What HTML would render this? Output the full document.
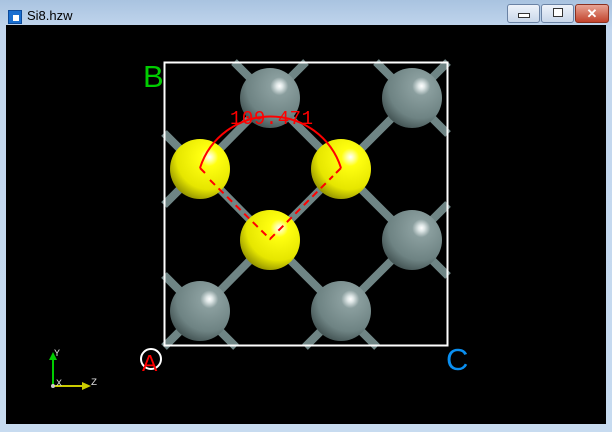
<!DOCTYPE html>
<html><head><style>
html,body{margin:0;padding:0;width:612px;height:432px;overflow:hidden;background:#b9d1ea}
.frame{position:absolute;left:0;top:0;width:612px;height:432px;background:linear-gradient(#a9c3e0,#c3d7ee 30px,#c7dbf0);}
.title{position:absolute;left:27px;top:8px;font:13px "Liberation Sans",sans-serif;color:#000}
.icon{position:absolute;left:8px;top:10px;width:12px;height:12px;background:#1a6fd0;border:1px solid #0c4a9a}
.icon:after{content:"";position:absolute;left:4px;top:4px;width:6px;height:6px;background:#fff}
.btn{position:absolute;top:4px;height:17px;border:1px solid #6a82a4;border-radius:3px;background:linear-gradient(#eef3fa,#c9d7ea)}
.view{position:absolute;left:6px;top:25px;width:600px;height:399px;background:#000}
</style></head><body>
<div class="frame"></div>
<div class="icon"></div>
<div class="title">Si8.hzw</div>
<div class="btn" style="left:507px;width:31px"><div style="position:absolute;left:10px;top:8px;width:10px;height:3px;border:1px solid #333;background:#fff"></div></div>
<div class="btn" style="left:541px;width:31px"><div style="position:absolute;left:11px;top:3px;width:8px;height:7px;border:1px solid #333;background:#fff"></div></div>
<div class="btn" style="left:575px;width:32px;background:linear-gradient(#e8a595,#c2432c);border-color:#8a3020;color:#fff;font:bold 13px 'Liberation Sans',sans-serif;text-align:center;line-height:17px">✕</div>
<div class="view"></div>
<svg width="612" height="432" style="position:absolute;left:0;top:0">
<defs>
<radialGradient id="g" cx="0.63" cy="0.32" r="0.75" fx="0.66" fy="0.3"><stop offset="0" stop-color="#ffffff"/><stop offset="0.07" stop-color="#dfe7e7"/><stop offset="0.2" stop-color="#8a9e9e"/><stop offset="0.7" stop-color="#6e8383"/><stop offset="1" stop-color="#3e4e4e"/></radialGradient>
<radialGradient id="y" cx="0.63" cy="0.32" r="0.75" fx="0.66" fy="0.3"><stop offset="0" stop-color="#ffffff"/><stop offset="0.07" stop-color="#ffffb0"/><stop offset="0.2" stop-color="#ffff10"/><stop offset="0.7" stop-color="#e6e600"/><stop offset="1" stop-color="#8a8a00"/></radialGradient>
</defs>
<g stroke="#6f8585" stroke-width="8">
<line x1="200" y1="169" x2="270" y2="98"/><line x1="341" y1="169" x2="270" y2="98"/>
<line x1="341" y1="169" x2="412" y2="98"/><line x1="200" y1="169" x2="270" y2="240"/>
<line x1="341" y1="169" x2="270" y2="240"/><line x1="341" y1="169" x2="412" y2="240"/>
<line x1="270" y1="240" x2="200" y2="311"/><line x1="270" y1="240" x2="341" y2="311"/>
<line x1="412" y1="240" x2="341" y2="311"/>
<line x1="270" y1="98" x2="234" y2="62"/><line x1="270" y1="98" x2="306" y2="62"/>
<line x1="412" y1="98" x2="376" y2="62"/><line x1="412" y1="98" x2="448" y2="62"/><line x1="412" y1="98" x2="448" y2="134"/>
<line x1="200" y1="169" x2="164" y2="133"/><line x1="200" y1="169" x2="164" y2="205"/>
<line x1="412" y1="240" x2="448" y2="204"/><line x1="412" y1="240" x2="448" y2="276"/>
<line x1="200" y1="311" x2="164" y2="275"/><line x1="200" y1="311" x2="164" y2="347"/><line x1="200" y1="311" x2="236" y2="347"/>
<line x1="341" y1="311" x2="305" y2="347"/><line x1="341" y1="311" x2="377" y2="347"/>
</g>
<rect x="164.5" y="62.5" width="283" height="283" fill="none" stroke="#fff" stroke-width="2"/>
<circle cx="270" cy="98" r="30" fill="url(#g)"/><circle cx="412" cy="98" r="30" fill="url(#g)"/>
<circle cx="200" cy="169" r="30" fill="url(#y)"/><circle cx="341" cy="169" r="30" fill="url(#y)"/>
<circle cx="270" cy="240" r="30" fill="url(#y)"/><circle cx="412" cy="240" r="30" fill="url(#g)"/>
<circle cx="200" cy="311" r="30" fill="url(#g)"/><circle cx="341" cy="311" r="30" fill="url(#g)"/>
<path d="M200 168 A74 74 0 0 1 341 168" fill="none" stroke="#f00" stroke-width="2"/>
<path d="M200 168 L205 173 M341 168 L336 173" stroke="#f00" stroke-width="2"/>
<path d="M210 180 L270 239 L333 176" fill="none" stroke="#f00" stroke-width="2" stroke-dasharray="7,5"/>
<text x="230" y="124" font-family="Liberation Mono,monospace" font-size="19" fill="#f00" textLength="83">109.471</text>
<text x="143" y="87" font-family="Liberation Sans,sans-serif" font-size="31" fill="#0c0">B</text>
<text x="446" y="370" font-family="Liberation Sans,sans-serif" font-size="31" fill="#0a8ff0">C</text>
<circle cx="151" cy="359" r="10" fill="none" stroke="#fff" stroke-width="2"/>
<text x="142" y="371" font-family="Liberation Sans,sans-serif" font-size="23" fill="#f00">A</text>
<line x1="53" y1="386" x2="53" y2="358" stroke="#0c0" stroke-width="2"/><path d="M49 360 L53 352 L57 360Z" fill="#0c0"/>
<line x1="53" y1="386" x2="84" y2="386" stroke="#cc0" stroke-width="2"/><path d="M82 382 L91 386 L82 390Z" fill="#cc0"/>
<circle cx="53" cy="386" r="2" fill="#ccc"/>
<g font-family="Liberation Mono,monospace" font-size="10" fill="#ddd"><text x="54" y="356">Y</text><text x="56" y="386">X</text><text x="91" y="385">Z</text></g>
</svg>
</body></html>
